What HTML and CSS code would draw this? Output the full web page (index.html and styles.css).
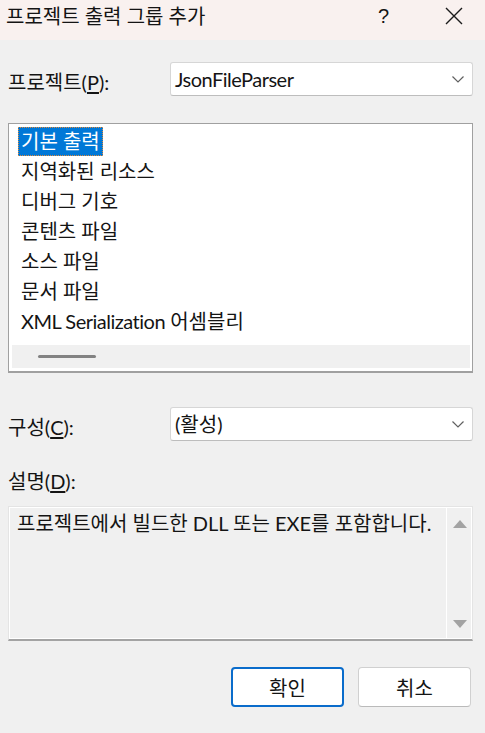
FILE: index.html
```html
<!DOCTYPE html>
<html lang="ko">
<head>
<meta charset="utf-8">
<title>프로젝트 출력 그룹 추가</title>
<link rel="stylesheet" href="styles.css">
</head>
<body>
<div class="dialog">
  <div class="titlebar">
    <span class="title">프로젝트 출력 그룹 추가</span>
    <span class="help">?</span>
    <svg class="close" width="18" height="18" viewBox="0 0 18 18"><path d="M1 1 L17 17 M17 1 L1 17" stroke="#1b1b1b" stroke-width="1.4" fill="none"/></svg>
  </div>
  <div class="content">
    <div class="field-row row-project">
      <label class="label">프로젝트(<u>P</u>):</label>
      <div class="combo">
        <span class="combo-text"><span class="latin">JsonFileParser</span></span>
        <svg class="chevron" width="12" height="7" viewBox="0 0 12 7"><path d="M0.5 0.5 L6 6 L11.5 0.5" stroke="#606060" stroke-width="1.2" fill="none"/></svg>
      </div>
    </div>

    <div class="listbox">
      <div class="items">
        <div class="item"><span class="item-text selected">기본 출력</span></div>
        <div class="item"><span class="item-text">지역화된 리소스</span></div>
        <div class="item"><span class="item-text">디버그 기호</span></div>
        <div class="item"><span class="item-text">콘텐츠 파일</span></div>
        <div class="item"><span class="item-text">소스 파일</span></div>
        <div class="item"><span class="item-text">문서 파일</span></div>
        <div class="item"><span class="item-text"><span class="latin">XML Serialization</span> 어셈블리</span></div>
      </div>
      <div class="hscroll"><div class="hthumb"></div></div>
    </div>

    <div class="field-row row-config">
      <label class="label">구성(<u>C</u>):</label>
      <div class="combo">
        <span class="combo-text">(활성)</span>
        <svg class="chevron" width="12" height="7" viewBox="0 0 12 7"><path d="M0.5 0.5 L6 6 L11.5 0.5" stroke="#606060" stroke-width="1.2" fill="none"/></svg>
      </div>
    </div>

    <div class="desc-label">설명(<u>D</u>):</div>
    <div class="descbox">
      <div class="desc-text">프로젝트에서 빌드한 DLL 또는 EXE를 포함합니다.</div>
      <div class="vscroll">
        <svg width="14" height="8" viewBox="0 0 14 8"><path d="M7 0 L14 8 L0 8 Z" fill="#a3a3a3"/></svg>
        <svg width="14" height="8" viewBox="0 0 14 8"><path d="M0 0 L14 0 L7 8 Z" fill="#a3a3a3"/></svg>
      </div>
    </div>

    <div class="buttons">
      <button class="btn btn-default">확인</button>
      <button class="btn">취소</button>
    </div>
  </div>
</div>
</body>
</html>
```

FILE: styles.css
```css
html, body {
  margin: 0;
  padding: 0;
}
body {
  background: #f0f0f0;
  font-family: Lato, "Noto Sans CJK KR", sans-serif;
  font-size: 20px;
  color: #141414;
}
.latin {
  letter-spacing: -0.5px;
}
.dialog {
  width: 485px;
  height: 733px;
  background: #f0f0f0;
}
.titlebar {
  height: 40px;
  box-sizing: border-box;
  padding: 0 0 8px 6px;
  background: #f9f1ef;
  display: flex;
  align-items: center;
}
.title {
  flex: 1;
  font-size: 20px;
  line-height: 26px;
}
.help {
  font-family: "Liberation Sans", sans-serif;
  font-size: 20px;
  line-height: 24px;
  margin-right: 56px;
}
.close {
  margin-right: 22px;
}
.content {
  padding: 0 12px 0 8px;
  display: flex;
  flex-direction: column;
}
.field-row {
  display: flex;
  align-items: center;
  height: 34px;
}
.row-project {
  margin-top: 22px;
}
.row-config {
  margin-top: 34px;
}
.label {
  width: 162px;
  padding-top: 6px;
  line-height: 26px;
}
.label u {
  text-underline-offset: 2px;
}
.combo {
  flex: 1;
  height: 34px;
  box-sizing: border-box;
  background: #ffffff;
  border: 1px solid #d6d6d6;
  border-bottom-color: #bdbdbd;
  border-radius: 3px;
  display: flex;
  align-items: center;
  padding: 0 8px 0 4px;
}
.combo-text {
  flex: 1;
  line-height: 26px;
}
.listbox {
  margin-top: 27px;
  height: 250px;
  box-sizing: border-box;
  border: 1px solid #a0a0a0;
  border-bottom-width: 2px;
  background: #ffffff;
  display: flex;
  flex-direction: column;
  padding: 3px 2px 3px 3px;
}
.items {
  flex: 1;
}
.item {
  height: 30px;
  display: flex;
  align-items: flex-start;
  padding-left: 6px;
}
.item-text {
  height: 29px;
  line-height: 29px;
  padding: 0 3px;
  box-sizing: border-box;
  white-space: nowrap;
}
.item-text.selected {
  background: #0078d7;
  color: #ffffff;
  outline: 1px dotted #e08a3c;
  outline-offset: -1px;
}
.hscroll {
  height: 23px;
  background: #f0f0f0;
  display: flex;
  align-items: center;
  padding-left: 26px;
}
.hthumb {
  width: 58px;
  height: 3px;
  border-radius: 2px;
  background: #828282;
}
.desc-label {
  margin-top: 27px;
  line-height: 26px;
}
.desc-label u {
  text-underline-offset: 2px;
}
.descbox {
  margin-top: 12px;
  height: 135px;
  box-sizing: border-box;
  border: 1px solid #e4e4e4;
  border-bottom: 2px solid #a3a3a3;
  box-shadow: inset 1px 1px 0 #ffffff, inset -1px -1px 0 #ffffff;
  background: #f0f0f0;
  display: flex;
}
.desc-text {
  flex: 1;
  padding: 3px 0 0 8px;
  line-height: 26px;
  white-space: nowrap;
}
.vscroll {
  width: 26px;
  border-left: 1px solid #ffffff;
  display: flex;
  flex-direction: column;
  align-items: center;
  justify-content: space-between;
  padding: 13px 0 11px;
  box-sizing: border-box;
}
.buttons {
  margin-top: 26px;
  display: flex;
  justify-content: flex-end;
  gap: 14px;
  padding-right: 2px;
}
.btn {
  width: 113px;
  height: 40px;
  box-sizing: border-box;
  background: #ffffff;
  border: 1px solid #d0d0d0;
  border-bottom-color: #bababa;
  border-radius: 4px;
  font-family: Lato, "Noto Sans CJK KR", sans-serif;
  font-size: 20px;
  color: #141414;
  padding: 0;
}
.btn-default {
  border: 2px solid #0a6ccb;
}
```
